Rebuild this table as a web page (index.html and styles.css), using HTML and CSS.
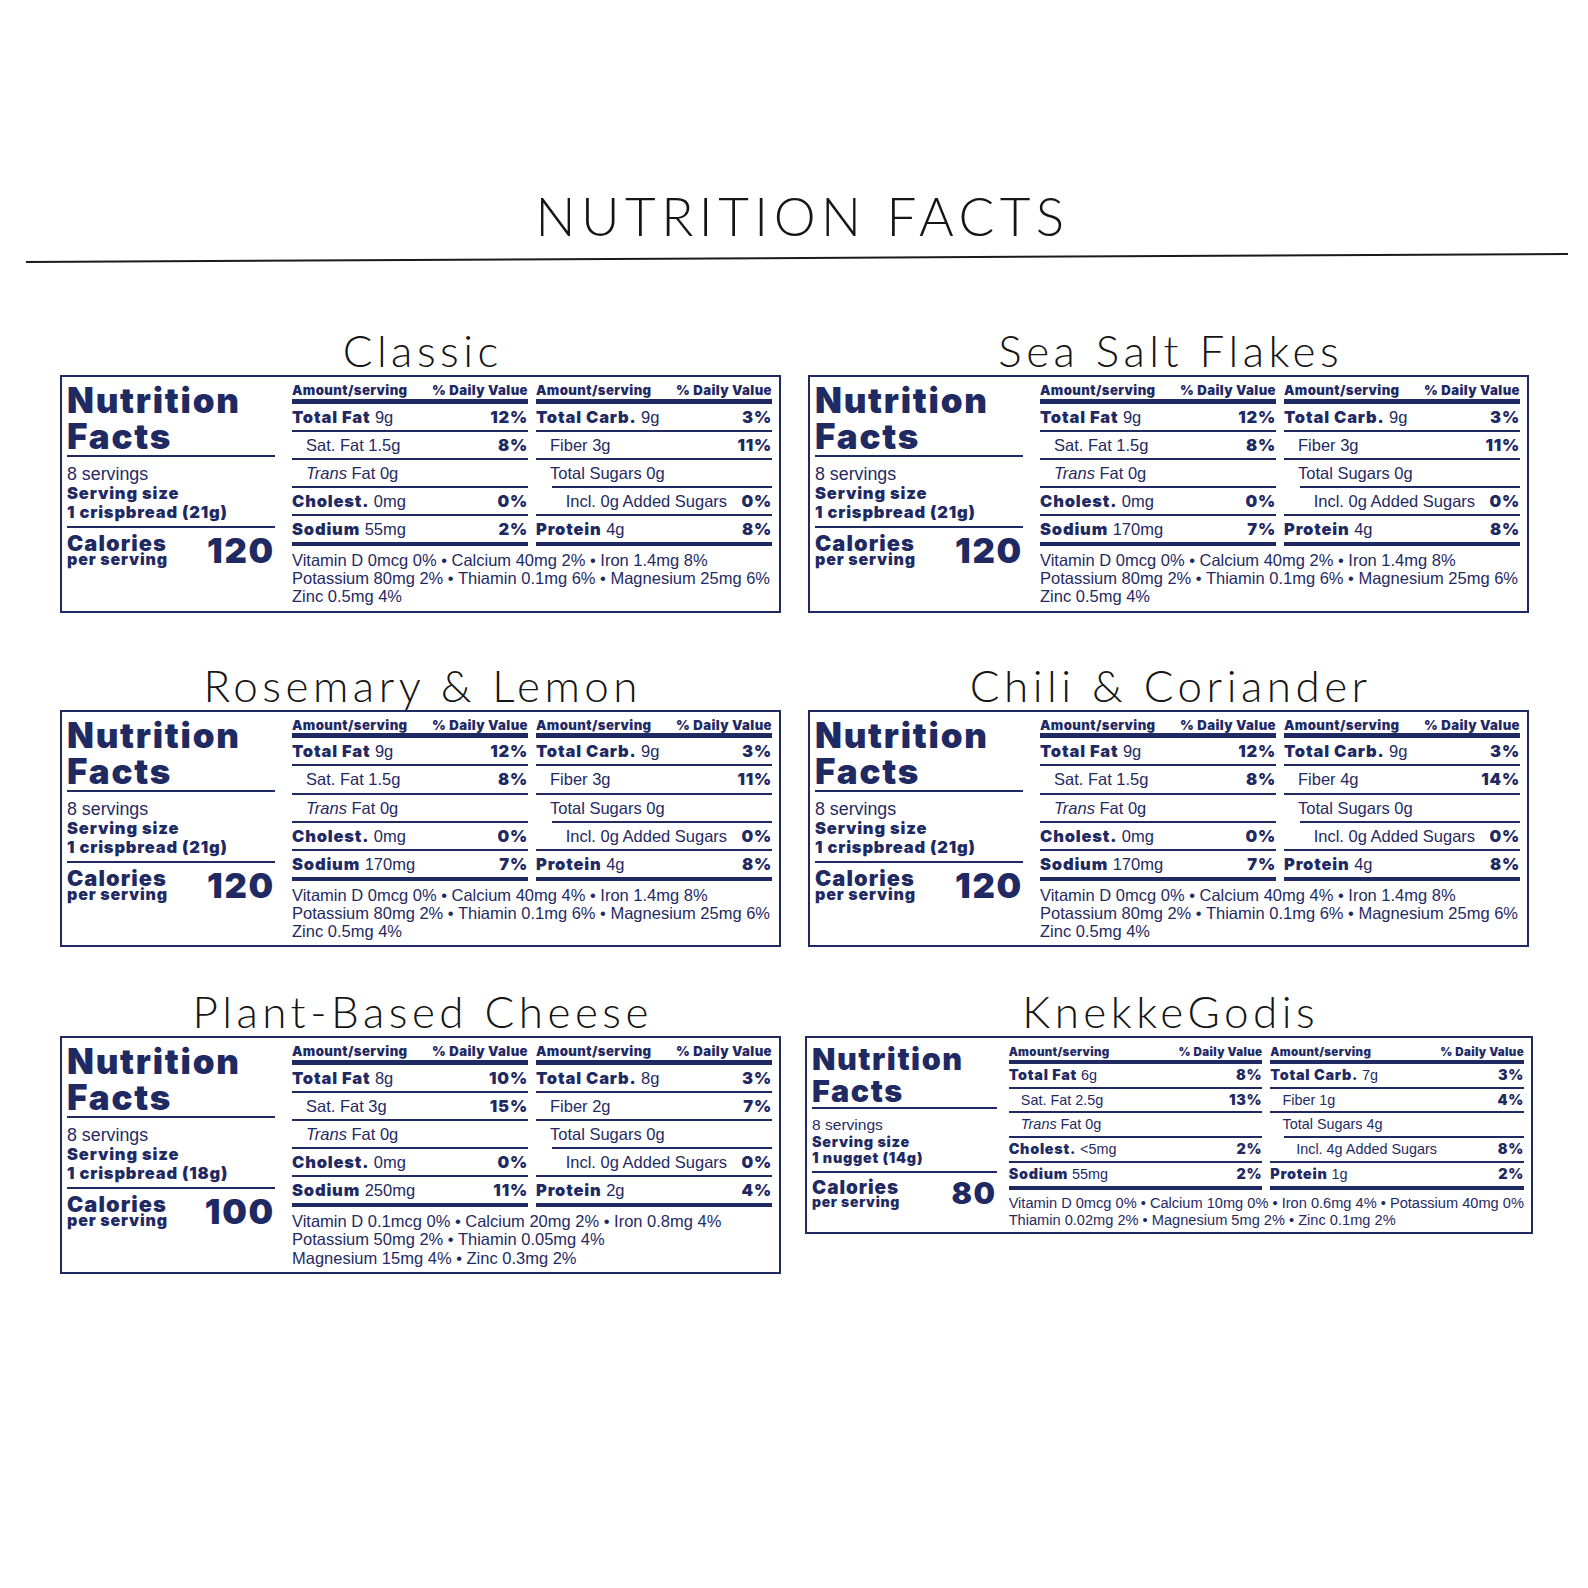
FILE: index.html
```html
<!DOCTYPE html>
<html lang="en">
<head>
<meta charset="utf-8">
<title>Nutrition Facts</title>
<link rel="stylesheet" href="styles.css">
</head>
<body>
<div class="page">
  <h1 class="title">NUTRITION FACTS</h1>
  <div class="rule"></div>

  <div class="grid">
    <!-- Classic -->
    <section class="item row1">
      <h2 class="flavor">Classic</h2>
      <div class="label">
        <div class="id">
          <div class="nf">Nutrition<br>Facts</div>
          <div class="serv">
            <div class="servings">8 servings</div>
            <div class="ssize">Serving size<br>1 crispbread (21g)</div>
          </div>
          <div class="cal">
            <div class="cal-l"><div class="cal-t">Calories</div><div class="cal-s">per serving</div></div>
            <div class="cal-n">120</div>
          </div>
        </div>
        <div class="col">
          <div class="hdr"><span>Amount/serving</span><span>% Daily Value</span></div>
          <div class="r"><span><b>Total Fat</b> 9g</span><b>12%</b></div>
          <div class="r ind"><span>Sat. Fat 1.5g</span><b>8%</b></div>
          <div class="r ind"><span><i>Trans</i> Fat 0g</span></div>
          <div class="r"><span><b>Cholest.</b> 0mg</span><b>0%</b></div>
          <div class="r end"><span><b>Sodium</b> 55mg</span><b>2%</b></div>
        </div>
        <div class="col">
          <div class="hdr"><span>Amount/serving</span><span>% Daily Value</span></div>
          <div class="r"><span><b>Total Carb.</b> 9g</span><b>3%</b></div>
          <div class="r ind"><span>Fiber 3g</span><b>11%</b></div>
          <div class="r ind sug"><span>Total Sugars 0g</span></div>
          <div class="r ind2"><span>Incl. 0g Added Sugars</span><b>0%</b></div>
          <div class="r end"><span><b>Protein</b> 4g</span><b>8%</b></div>
        </div>
        <div class="vits">Vitamin D 0mcg 0% • Calcium 40mg 2% • Iron 1.4mg 8%<br>Potassium 80mg 2% • Thiamin 0.1mg 6% • Magnesium 25mg 6%<br>Zinc 0.5mg 4%</div>
      </div>
    </section>

    <!-- Sea Salt Flakes -->
    <section class="item row1">
      <h2 class="flavor">Sea Salt Flakes</h2>
      <div class="label">
        <div class="id">
          <div class="nf">Nutrition<br>Facts</div>
          <div class="serv">
            <div class="servings">8 servings</div>
            <div class="ssize">Serving size<br>1 crispbread (21g)</div>
          </div>
          <div class="cal">
            <div class="cal-l"><div class="cal-t">Calories</div><div class="cal-s">per serving</div></div>
            <div class="cal-n">120</div>
          </div>
        </div>
        <div class="col">
          <div class="hdr"><span>Amount/serving</span><span>% Daily Value</span></div>
          <div class="r"><span><b>Total Fat</b> 9g</span><b>12%</b></div>
          <div class="r ind"><span>Sat. Fat 1.5g</span><b>8%</b></div>
          <div class="r ind"><span><i>Trans</i> Fat 0g</span></div>
          <div class="r"><span><b>Cholest.</b> 0mg</span><b>0%</b></div>
          <div class="r end"><span><b>Sodium</b> 170mg</span><b>7%</b></div>
        </div>
        <div class="col">
          <div class="hdr"><span>Amount/serving</span><span>% Daily Value</span></div>
          <div class="r"><span><b>Total Carb.</b> 9g</span><b>3%</b></div>
          <div class="r ind"><span>Fiber 3g</span><b>11%</b></div>
          <div class="r ind sug"><span>Total Sugars 0g</span></div>
          <div class="r ind2"><span>Incl. 0g Added Sugars</span><b>0%</b></div>
          <div class="r end"><span><b>Protein</b> 4g</span><b>8%</b></div>
        </div>
        <div class="vits">Vitamin D 0mcg 0% • Calcium 40mg 2% • Iron 1.4mg 8%<br>Potassium 80mg 2% • Thiamin 0.1mg 6% • Magnesium 25mg 6%<br>Zinc 0.5mg 4%</div>
      </div>
    </section>

    <!-- Rosemary & Lemon -->
    <section class="item">
      <h2 class="flavor">Rosemary &amp; Lemon</h2>
      <div class="label">
        <div class="id">
          <div class="nf">Nutrition<br>Facts</div>
          <div class="serv">
            <div class="servings">8 servings</div>
            <div class="ssize">Serving size<br>1 crispbread (21g)</div>
          </div>
          <div class="cal">
            <div class="cal-l"><div class="cal-t">Calories</div><div class="cal-s">per serving</div></div>
            <div class="cal-n">120</div>
          </div>
        </div>
        <div class="col">
          <div class="hdr"><span>Amount/serving</span><span>% Daily Value</span></div>
          <div class="r"><span><b>Total Fat</b> 9g</span><b>12%</b></div>
          <div class="r ind"><span>Sat. Fat 1.5g</span><b>8%</b></div>
          <div class="r ind"><span><i>Trans</i> Fat 0g</span></div>
          <div class="r"><span><b>Cholest.</b> 0mg</span><b>0%</b></div>
          <div class="r end"><span><b>Sodium</b> 170mg</span><b>7%</b></div>
        </div>
        <div class="col">
          <div class="hdr"><span>Amount/serving</span><span>% Daily Value</span></div>
          <div class="r"><span><b>Total Carb.</b> 9g</span><b>3%</b></div>
          <div class="r ind"><span>Fiber 3g</span><b>11%</b></div>
          <div class="r ind sug"><span>Total Sugars 0g</span></div>
          <div class="r ind2"><span>Incl. 0g Added Sugars</span><b>0%</b></div>
          <div class="r end"><span><b>Protein</b> 4g</span><b>8%</b></div>
        </div>
        <div class="vits">Vitamin D 0mcg 0% • Calcium 40mg 4% • Iron 1.4mg 8%<br>Potassium 80mg 2% • Thiamin 0.1mg 6% • Magnesium 25mg 6%<br>Zinc 0.5mg 4%</div>
      </div>
    </section>

    <!-- Chili & Coriander -->
    <section class="item">
      <h2 class="flavor">Chili &amp; Coriander</h2>
      <div class="label">
        <div class="id">
          <div class="nf">Nutrition<br>Facts</div>
          <div class="serv">
            <div class="servings">8 servings</div>
            <div class="ssize">Serving size<br>1 crispbread (21g)</div>
          </div>
          <div class="cal">
            <div class="cal-l"><div class="cal-t">Calories</div><div class="cal-s">per serving</div></div>
            <div class="cal-n">120</div>
          </div>
        </div>
        <div class="col">
          <div class="hdr"><span>Amount/serving</span><span>% Daily Value</span></div>
          <div class="r"><span><b>Total Fat</b> 9g</span><b>12%</b></div>
          <div class="r ind"><span>Sat. Fat 1.5g</span><b>8%</b></div>
          <div class="r ind"><span><i>Trans</i> Fat 0g</span></div>
          <div class="r"><span><b>Cholest.</b> 0mg</span><b>0%</b></div>
          <div class="r end"><span><b>Sodium</b> 170mg</span><b>7%</b></div>
        </div>
        <div class="col">
          <div class="hdr"><span>Amount/serving</span><span>% Daily Value</span></div>
          <div class="r"><span><b>Total Carb.</b> 9g</span><b>3%</b></div>
          <div class="r ind"><span>Fiber 4g</span><b>14%</b></div>
          <div class="r ind sug"><span>Total Sugars 0g</span></div>
          <div class="r ind2"><span>Incl. 0g Added Sugars</span><b>0%</b></div>
          <div class="r end"><span><b>Protein</b> 4g</span><b>8%</b></div>
        </div>
        <div class="vits">Vitamin D 0mcg 0% • Calcium 40mg 4% • Iron 1.4mg 8%<br>Potassium 80mg 2% • Thiamin 0.1mg 6% • Magnesium 25mg 6%<br>Zinc 0.5mg 4%</div>
      </div>
    </section>

    <!-- Plant-Based Cheese -->
    <section class="item">
      <h2 class="flavor">Plant-Based Cheese</h2>
      <div class="label">
        <div class="id">
          <div class="nf">Nutrition<br>Facts</div>
          <div class="serv">
            <div class="servings">8 servings</div>
            <div class="ssize">Serving size<br>1 crispbread (18g)</div>
          </div>
          <div class="cal">
            <div class="cal-l"><div class="cal-t">Calories</div><div class="cal-s">per serving</div></div>
            <div class="cal-n">100</div>
          </div>
        </div>
        <div class="col">
          <div class="hdr"><span>Amount/serving</span><span>% Daily Value</span></div>
          <div class="r"><span><b>Total Fat</b> 8g</span><b>10%</b></div>
          <div class="r ind"><span>Sat. Fat 3g</span><b>15%</b></div>
          <div class="r ind"><span><i>Trans</i> Fat 0g</span></div>
          <div class="r"><span><b>Cholest.</b> 0mg</span><b>0%</b></div>
          <div class="r end"><span><b>Sodium</b> 250mg</span><b>11%</b></div>
        </div>
        <div class="col">
          <div class="hdr"><span>Amount/serving</span><span>% Daily Value</span></div>
          <div class="r"><span><b>Total Carb.</b> 8g</span><b>3%</b></div>
          <div class="r ind"><span>Fiber 2g</span><b>7%</b></div>
          <div class="r ind sug"><span>Total Sugars 0g</span></div>
          <div class="r ind2"><span>Incl. 0g Added Sugars</span><b>0%</b></div>
          <div class="r end"><span><b>Protein</b> 2g</span><b>4%</b></div>
        </div>
        <div class="vits">Vitamin D 0.1mcg 0% • Calcium 20mg 2% • Iron 0.8mg 4%<br>Potassium 50mg 2% • Thiamin 0.05mg 4%<br>Magnesium 15mg 4% • Zinc 0.3mg 2%</div>
      </div>
    </section>

    <!-- KnekkeGodis -->
    <section class="item">
      <h2 class="flavor">KnekkeGodis</h2>
      <div class="label small">
        <div class="id">
          <div class="nf">Nutrition<br>Facts</div>
          <div class="serv">
            <div class="servings">8 servings</div>
            <div class="ssize">Serving size<br>1 nugget (14g)</div>
          </div>
          <div class="cal">
            <div class="cal-l"><div class="cal-t">Calories</div><div class="cal-s">per serving</div></div>
            <div class="cal-n">80</div>
          </div>
        </div>
        <div class="col">
          <div class="hdr"><span>Amount/serving</span><span>% Daily Value</span></div>
          <div class="r"><span><b>Total Fat</b> 6g</span><b>8%</b></div>
          <div class="r ind"><span>Sat. Fat 2.5g</span><b>13%</b></div>
          <div class="r ind"><span><i>Trans</i> Fat 0g</span></div>
          <div class="r"><span><b>Cholest.</b> &lt;5mg</span><b>2%</b></div>
          <div class="r end"><span><b>Sodium</b> 55mg</span><b>2%</b></div>
        </div>
        <div class="col">
          <div class="hdr"><span>Amount/serving</span><span>% Daily Value</span></div>
          <div class="r"><span><b>Total Carb.</b> 7g</span><b>3%</b></div>
          <div class="r ind"><span>Fiber 1g</span><b>4%</b></div>
          <div class="r ind sug"><span>Total Sugars 4g</span></div>
          <div class="r ind2"><span>Incl. 4g Added Sugars</span><b>8%</b></div>
          <div class="r end"><span><b>Protein</b> 1g</span><b>2%</b></div>
        </div>
        <div class="vits">Vitamin D 0mcg 0% • Calcium 10mg 0% • Iron 0.6mg 4% • Potassium 40mg 0%<br>Thiamin 0.02mg 2% • Magnesium 5mg 2% • Zinc 0.1mg 2%</div>
      </div>
    </section>
  </div>
</div>
</body>
</html>
```

FILE: styles.css
```css
:root {
  --navy: #1f2a63;
  --ink: #151515;
  --bold: "Inter", "Liberation Sans", sans-serif;
}

* { box-sizing: border-box; }

body {
  margin: 0;
  background: #ffffff;
  font-family: "Liberation Sans", Arial, sans-serif;
}

.page {
  width: 1588px;
  padding-top: 189px;
}

.title {
  margin: 0;
  padding-left: 17px;
  font-family: "Lato", sans-serif;
  font-weight: 300;
  font-size: 53px;
  line-height: 1;
  letter-spacing: 5.5px;
  text-align: center;
  color: var(--ink);
}

.rule {
  margin: 15px 0 0 26px;
  width: 1542px;
  height: 2px;
  background: #1a1a1a;
  transform: rotate(-0.3deg);
}

.grid {
  display: grid;
  grid-template-columns: 721px 721px;
  column-gap: 27px;
  row-gap: 42px;
  margin: 69px 0 0 60px;
}

.row1 { margin-bottom: 8px; }

.flavor {
  margin: 0 0 3px;
  font-family: "Lato", sans-serif;
  font-weight: 300;
  font-size: 44px;
  line-height: 44px;
  letter-spacing: 4.5px;
  text-indent: 4.5px;
  text-align: center;
  color: var(--ink);
}

.label {
  display: grid;
  grid-template-columns: 13.15em 1fr 1fr;
  column-gap: 8px;
  align-items: start;
  padding: 5px 7px 5px 5px;
  border: 2px solid var(--navy);
  font-size: 16.5px;
  color: var(--navy);
}

.label.small {
  font-size: 14.4px;
  margin: 0 -4px 0 -3px;
  padding-bottom: 3px;
  grid-template-columns: 13.1em 1fr 1fr;
}

.label b,
.hdr,
.nf,
.ssize,
.cal-t,
.cal-s,
.cal-n {
  font-family: var(--bold);
  font-weight: 900;
  letter-spacing: 0.05em;
}

.id {
  grid-row: 1 / span 2;
  margin-right: 9px;
}

.label.small .id { margin-right: 4px; }
.label.small .col { padding-top: 2px; }

.nf {
  font-size: 2.12em;
  line-height: 1.03;
  padding-bottom: 1px;
  border-bottom: 2px solid var(--navy);
}

.serv {
  padding: 8px 0 4px;
  border-bottom: 2px solid var(--navy);
}

.servings {
  font-size: 1.08em;
  line-height: 1.07;
}

.ssize {
  font-size: 1em;
  line-height: 1.15;
}

.cal {
  display: flex;
  justify-content: space-between;
  align-items: flex-start;
  padding-top: 8px;
}

.cal-t {
  font-size: 1.32em;
  line-height: 0.64;
  padding-top: 1px;
}

.cal-s {
  font-size: 0.97em;
  line-height: 0.94;
  margin-top: 1px;
}

.cal-n {
  font-size: 2.1em;
  line-height: 0.85;
}

.hdr {
  display: flex;
  justify-content: space-between;
  font-size: 0.8em;
  letter-spacing: 0.03em;
  line-height: 1.2;
  padding-top: 1px;
  border-bottom: 0.38em solid var(--navy);
}

.r {
  display: flex;
  justify-content: space-between;
  line-height: 1.58em;
  border-bottom: 2px solid var(--navy);
  white-space: nowrap;
}

.r.ind { padding-left: 0.85em; }
.r.ind2 { padding-left: 1.8em; }

.r.sug {
  border-bottom-color: transparent;
  background: linear-gradient(var(--navy), var(--navy)) right bottom / calc(100% - 0.95em) 2px no-repeat;
  background-origin: border-box;
}

.r.end { border-bottom: 0.3em solid var(--navy); }

.vits {
  grid-column: 2 / 4;
  margin-top: 5px;
  font-size: 1em;
  line-height: 1.1;
  white-space: nowrap;
}

.label.small .vits {
  font-size: 1.015em;
  line-height: 1.16;
}
```
